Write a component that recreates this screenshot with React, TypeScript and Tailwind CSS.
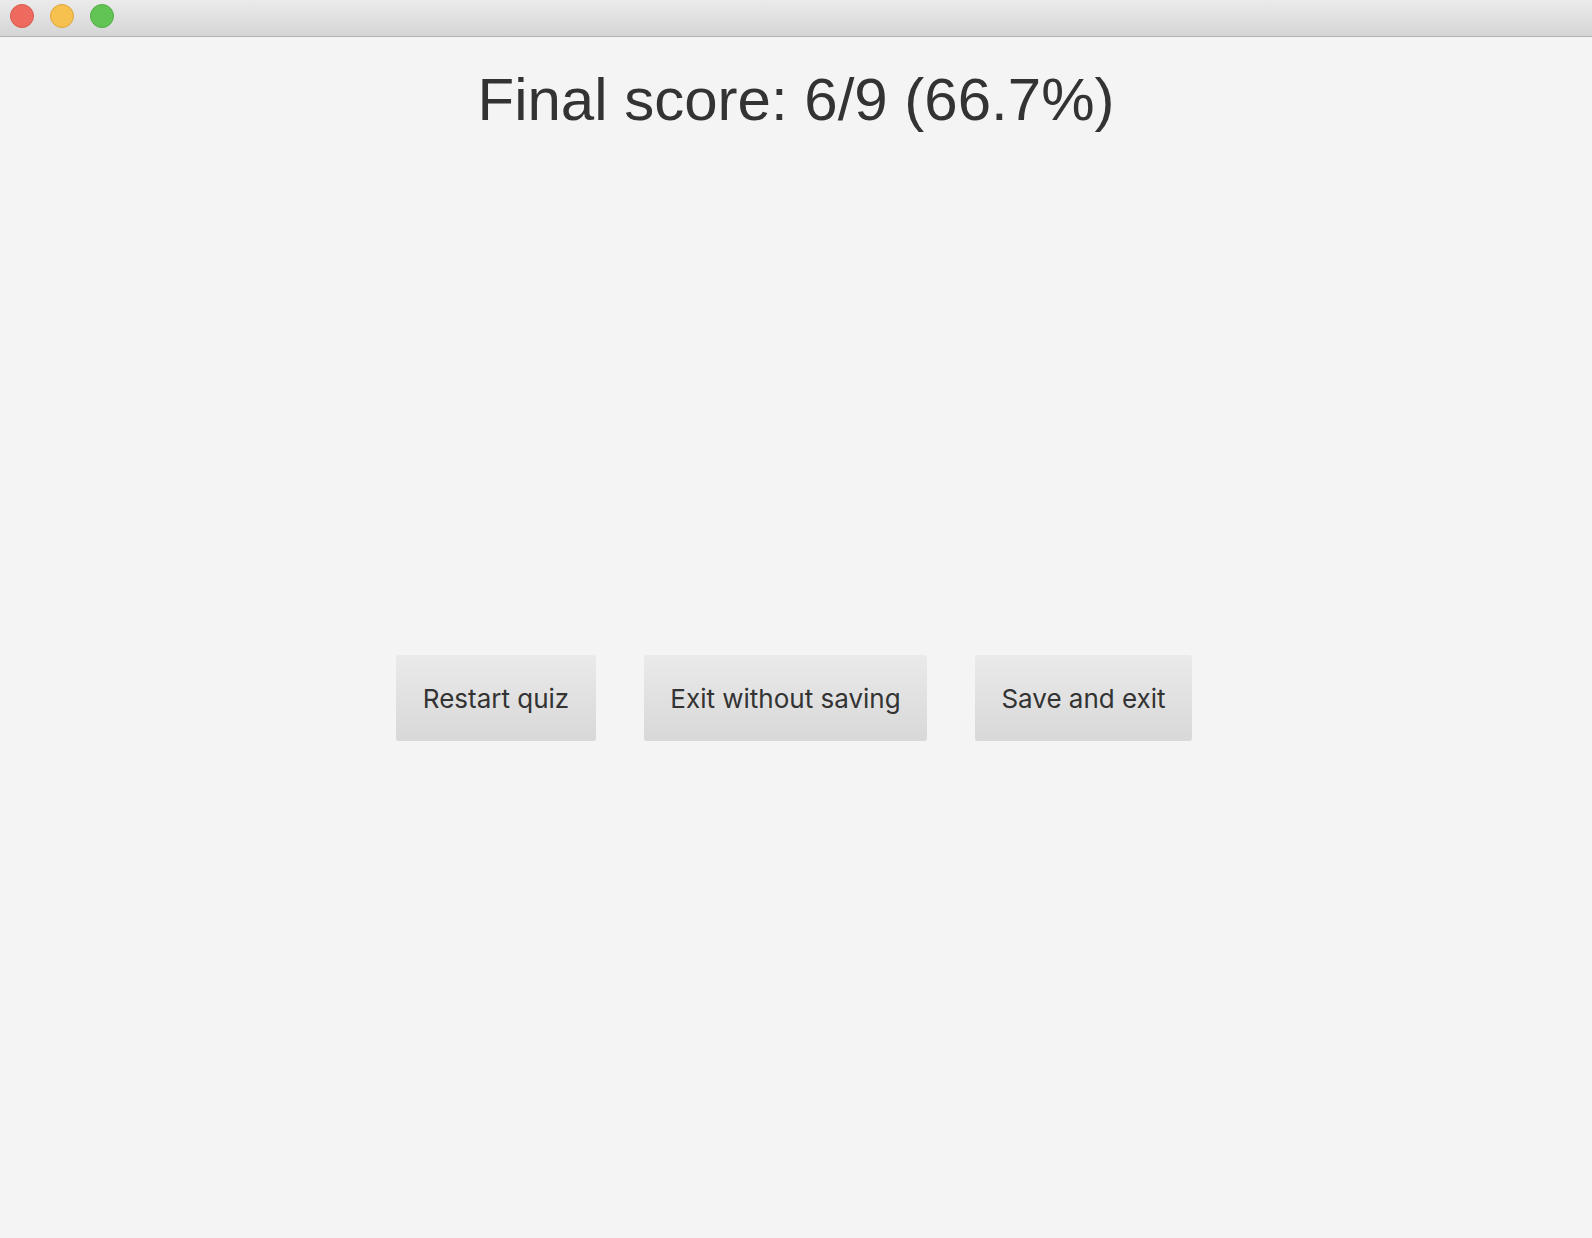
import React from "react";

export default function App() {
  const buttons = [
    { label: "Restart quiz", w: "w-[200px]" },
    { label: "Exit without saving", w: "w-[283px]" },
    { label: "Save and exit", w: "w-[217px]" },
  ];
  return (
    <div className="w-[1592px] h-[1238px] bg-[#f4f4f4] flex flex-col overflow-hidden">
      <div className="h-[37px] shrink-0 bg-gradient-to-b from-[#ebebeb] to-[#d5d5d5] border-b border-[#b3b3b3] flex items-start pt-[4px] pl-[10px] gap-[16px]">
        <div className="w-[24px] h-[24px] rounded-full bg-[#ee6a5f] border border-[#d8584e]" />
        <div className="w-[24px] h-[24px] rounded-full bg-[#f6c14f] border border-[#dea63c]" />
        <div className="w-[24px] h-[24px] rounded-full bg-[#62c454] border border-[#4fae42]" />
      </div>
      <div className="flex flex-col items-center">
        <h1
          className="mt-[28px] text-[60px] leading-[69px] text-[#333333]"
          style={{ fontFamily: '"Liberation Sans", Arial, sans-serif' }}
        >
          Final score: 6/9 (66.7%)
        </h1>
        <div className="mt-[521px] flex gap-[48px] ml-[-4px]">
          {buttons.map((b) => (
            <button
              key={b.label}
              className={`${b.w} h-[86px] rounded-[3px] bg-gradient-to-b from-[#eaeaea] to-[#d8d8d8] text-[#333333] text-[26px] flex items-center justify-center`}
              style={{ fontFamily: "Inter, Roboto, sans-serif" }}
            >
              {b.label}
            </button>
          ))}
        </div>
      </div>
    </div>
  );
}
